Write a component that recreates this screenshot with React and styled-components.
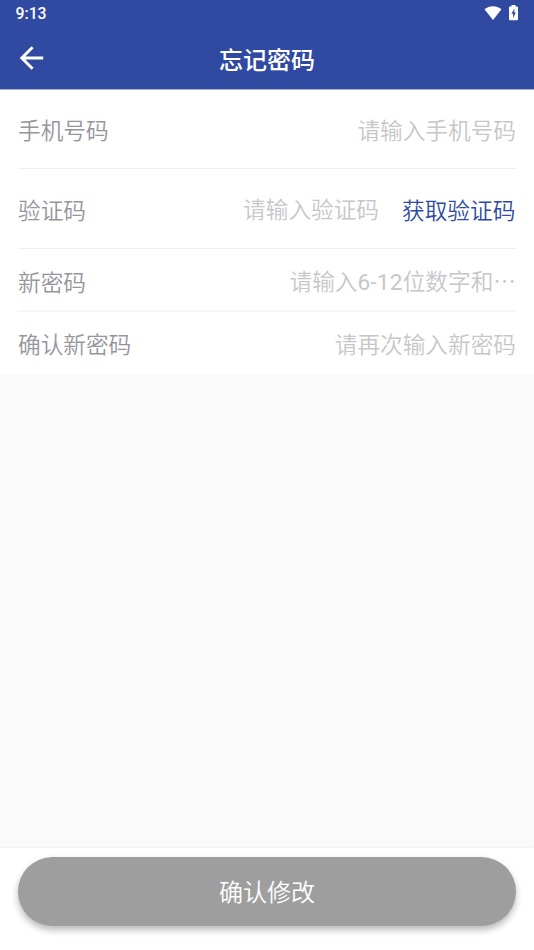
import React from 'react';
import styled, { createGlobalStyle } from 'styled-components';

const GlobalStyle = createGlobalStyle`
    * {
        box-sizing: border-box;
    }
    body {
        margin: 0;
        background: #fafafa;
        font-family: "Noto Sans CJK SC", sans-serif;
    }
`
const Screen = styled.div`
    display: flex;
    flex-direction: column;
    height: 950px;
    overflow: hidden;
    background: #fafafa;
`
const Header = styled.header`
    height: 90px;
    border-bottom: 1px solid #a5afd6;
    background: #2f4aa0;
    color: #fff;
`
const StatusBar = styled.div`
    display: flex;
    align-items: center;
    justify-content: space-between;
    height: 28px;
    padding: 0 16px 0 15.5px;
`
const Clock = styled.span`
    font-family: Roboto, sans-serif;
    font-size: 15.8px;
    font-weight: 500;
    line-height: 28px;
`
const StatusIcons = styled.div`
    display: flex;
    align-items: center;
    gap: 7px;
    height: 26px;
    margin-top: -2px;
`
const NavBar = styled.div`
    display: grid;
    grid-template-columns: 63px 1fr 63px;
    align-items: center;
    height: 60px;
`
const BackButton = styled.button`
    display: flex;
    justify-content: center;
    padding: 0;
    border: 0;
    background: none;
    color: inherit;
`
const Title = styled.h1`
    margin: 0;
    padding-top: 2px;
    font-size: 24px;
    font-weight: 500;
    line-height: 36px;
    text-align: center;
`
const Form = styled.main`
    padding: 0 18px;
    background: #fff;
`
const Row = styled.div`
    display: flex;
    align-items: center;
    height: ${props => props.$height}px;
    padding-top: ${props => props.$shift || 0}px;
    border-bottom: ${props => props.$line || 0}px solid ${props => props.$lineColor || '#efeff0'};
    font-size: 22.67px;
    font-weight: 350;
    line-height: 34px;
    white-space: nowrap;
`
const Label = styled.label`
    color: #95969c;
`
const Hint = styled.span`
    margin-left: auto;
    color: #c6c7c9;
    transform: translateY(${props => props.$lift || 0}px);
`
const Digits = styled.span`
    font-family: Roboto, sans-serif;
    font-weight: 400;
    letter-spacing: 0.2px;
`
const CodeButton = styled.button`
    margin-left: 23px;
    padding: 0 0.7px 0 0;
    border: 0;
    background: none;
    color: #2f4aa0;
    font: inherit;
`
const Footer = styled.footer`
    height: 102px;
    margin-top: auto;
    padding: 8.5px 18px 0;
    background: #fff;
    box-shadow: 0 -1px 2px rgba(0, 0, 0, 0.04);
`
const SubmitButton = styled.button`
    display: block;
    width: 100%;
    height: 69px;
    padding: 0 0 1px;
    border: 0;
    border-radius: 35px;
    background: #9e9e9e;
    color: #fff;
    font-family: inherit;
    font-size: 24px;
    font-weight: 350;
    box-shadow: 0 4px 7px rgba(0, 0, 0, 0.28);
`

const App = () => {
  return (
      <>
          <GlobalStyle/>
          <Screen lang="zh-CN">
              <Header>
                  <StatusBar>
                      <Clock>9:13</Clock>
                      <StatusIcons>
                          <svg width="18" height="14" viewBox="0 0 18 14" fill="#fff">
                              <path d="M0.5 3.2C5.4-.9 12.6-.9 17.5 3.2L9 14Z"/>
                          </svg>
                          <svg width="9" height="16" viewBox="0 0 9 16" fill="#fff" fillRule="evenodd">
                              <path d="M2.5 0h4v1.5H8Q9 1.5 9 2.5V14.3Q9 15.3 8 15.3H1Q0 15.3 0 14.3V2.5Q0 1.5 1 1.5H2.5ZM5.6 3.6L2.4 8.8H4.1V13.2L6.8 7.4H5.2Z"/>
                          </svg>
                      </StatusIcons>
                  </StatusBar>
                  <NavBar>
                      <BackButton aria-label="返回">
                          <svg width="24" height="24" viewBox="0 0 24 24" fill="none" stroke="#fff" strokeWidth="2.9">
                              <path d="M23.2 12H3M12.6 1.2L1.8 12L12.6 22.8"/>
                          </svg>
                      </BackButton>
                      <Title>忘记密码</Title>
                  </NavBar>
              </Header>
              <Form>
                  <Row $height={79} $line={1} $shift={2}>
                      <Label>手机号码</Label>
                      <Hint>请输入手机号码</Hint>
                  </Row>
                  <Row $height={80} $line={1} $shift={3}>
                      <Label>验证码</Label>
                      <Hint $lift={-1}>请输入验证码</Hint>
                      <CodeButton>获取验证码</CodeButton>
                  </Row>
                  <Row $height={63} $line={2} $lineColor="#f7f7f7" $shift={5}>
                      <Label>新密码</Label>
                      <Hint>请输入<Digits>6-12</Digits>位数字和…</Hint>
                  </Row>
                  <Row $height={62} $shift={2}>
                      <Label>确认新密码</Label>
                      <Hint>请再次输入新密码</Hint>
                  </Row>
              </Form>
              <Footer>
                  <SubmitButton>确认修改</SubmitButton>
              </Footer>
          </Screen>
      </>
  )
};

export default App;
